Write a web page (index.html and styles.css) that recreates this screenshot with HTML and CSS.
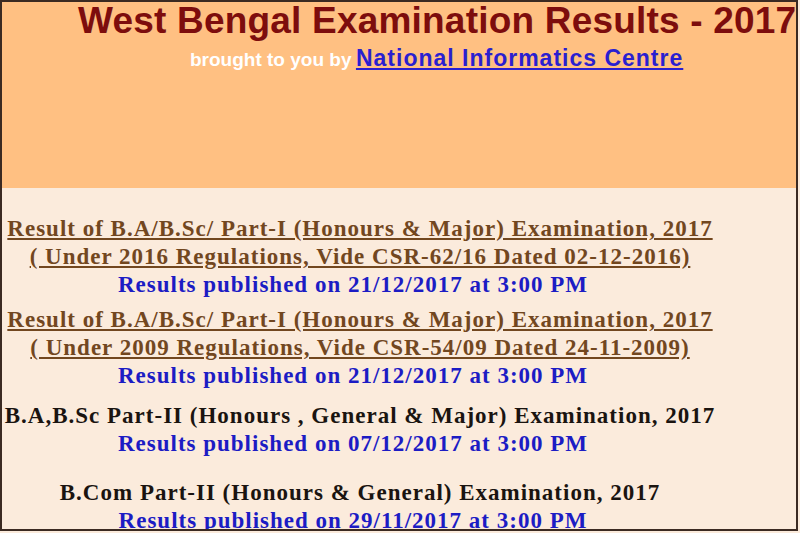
FILE: index.html
```html
<!DOCTYPE html>
<html>
<head>
<meta charset="utf-8">
<title>West Bengal Examination Results - 2017</title>
<link rel="stylesheet" href="styles.css">
</head>
<body>
<div class="frame">
  <header class="banner">
    <h1 class="title">West Bengal Examination Results - 2017</h1>
    <p class="byline"><span class="by">brought to you by</span> <a class="nic" href="#">National Informatics Centre</a></p>
  </header>
  <main class="results">
    <div class="item item-first">
      <a class="res-link" href="#">Result of B.A/B.Sc/ Part-I (Honours &amp; Major) Examination, 2017</a><br>
      <a class="res-link" href="#">( Under 2016 Regulations, Vide CSR-62/16 Dated 02-12-2016) </a>
      <div class="pub">Results published on 21/12/2017 at 3:00 PM</div>
    </div>
    <div class="item item-second">
      <a class="res-link" href="#">Result of B.A/B.Sc/ Part-I (Honours &amp; Major) Examination, 2017 </a><br>
      <a class="res-link" href="#">( Under 2009 Regulations, Vide CSR-54/09 Dated 24-11-2009)</a>
      <div class="pub">Results published on 21/12/2017 at 3:00 PM</div>
    </div>
    <div class="item item-third">
      <div class="plain">B.A,B.Sc Part-II (Honours , General &amp; Major) Examination, 2017</div>
      <div class="pub">Results published on 07/12/2017 at 3:00 PM</div>
    </div>
    <div class="item item-fourth">
      <div class="plain">B.Com Part-II (Honours &amp; General) Examination, 2017</div>
      <div class="pub">Results published on 29/11/2017 at 3:00 PM</div>
    </div>
  </main>
</div>
</body>
</html>
```
FILE: styles.css
```css
html, body {
  margin: 0;
  padding: 0;
  background: #fbebdc;
}
.frame {
  width: 794px;
  height: 527px;
  border: 2px solid #3b2a22;
  background: #fbebdc;
  overflow: hidden;
  box-sizing: content-box;
}
.banner {
  background: #ffc082;
  height: 186px;
  text-align: left;
  white-space: nowrap;
}
.title {
  margin: 0;
  padding-left: 76px;
  font-family: "Liberation Sans", Arial, sans-serif;
  font-weight: bold;
  font-size: 37px;
  letter-spacing: 0.2px;
  line-height: 38px;
  color: #7d0d0d;
}
.byline {
  margin: 5px 0 0 0;
  padding-left: 188px;
  font-family: "Liberation Sans", Arial, sans-serif;
  font-weight: bold;
  line-height: 26px;
}
.by {
  color: #ffffff;
  font-size: 19px;
}
.nic {
  color: #2a1fd0;
  font-size: 23px;
  letter-spacing: 1px;
  text-decoration: underline;
}
.results {
  width: 716px;
  padding-top: 27px;
  text-align: center;
  font-family: "Liberation Serif", "Times New Roman", serif;
  font-weight: bold;
  font-size: 23px;
  letter-spacing: 1px;
  line-height: 28px;
  white-space: nowrap;
}
.res-link {
  color: #72471f;
  text-decoration: underline;
}
.pub {
  color: #1c1cc4;
  padding-right: 14px;
}
.plain {
  color: #1a1410;
}
.item-second {
  margin-top: 7px;
}
.item-third {
  margin-top: 12px;
}
.item-fourth {
  margin-top: 21px;
}
```
